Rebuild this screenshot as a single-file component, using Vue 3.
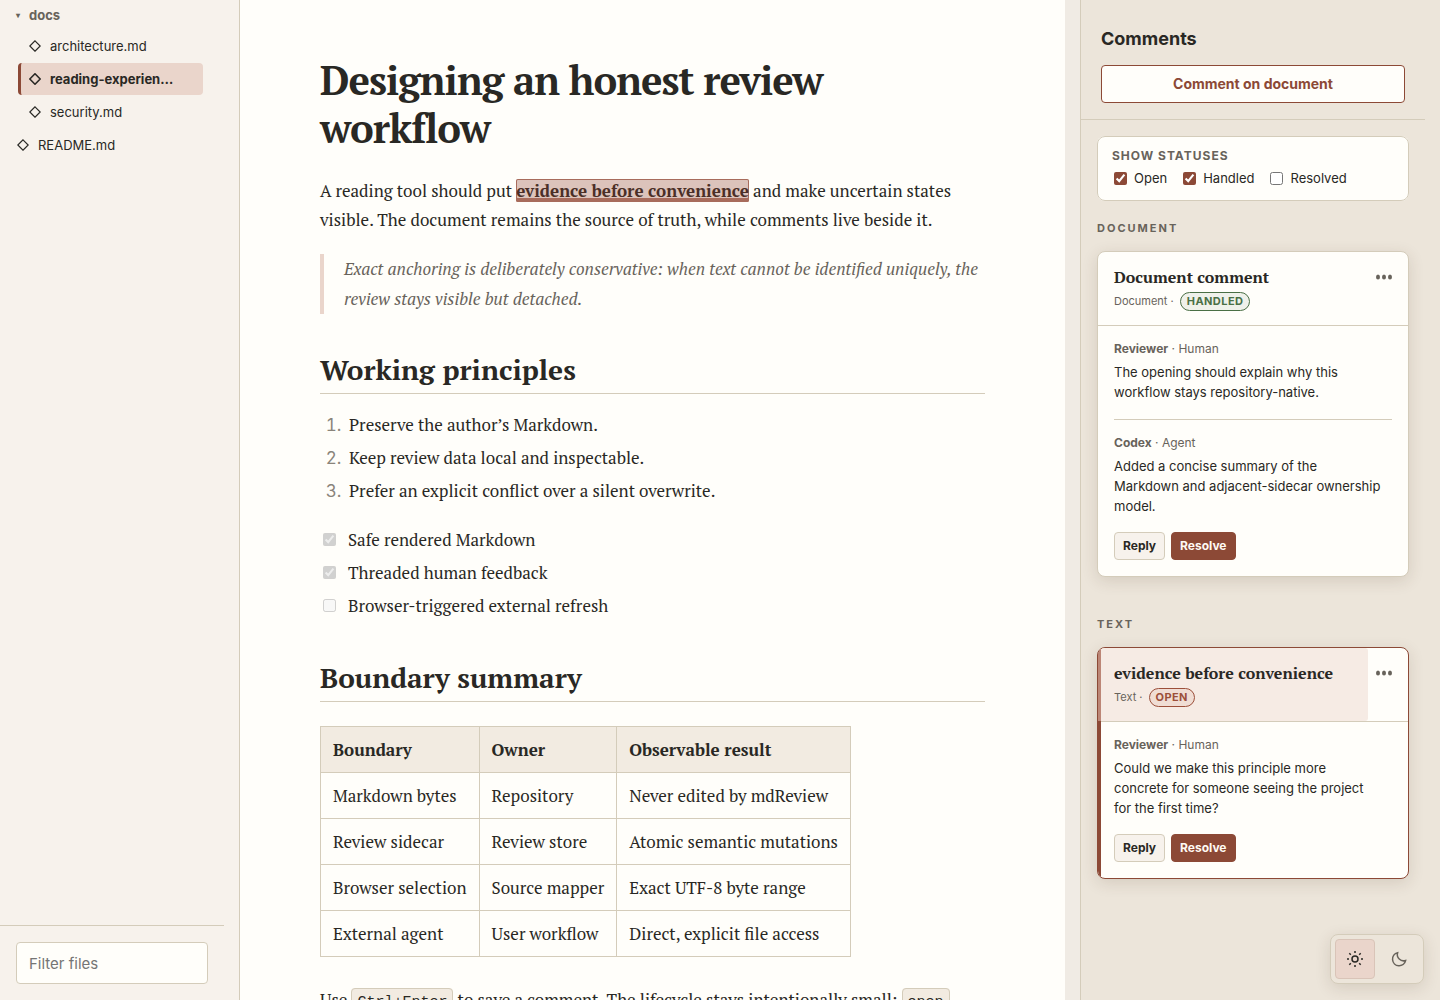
<script setup>
import { ref } from 'vue'

const files = [
  { name: 'architecture.md', nested: true },
  { name: 'reading-experience.md', nested: true, active: true },
  { name: 'security.md', nested: true },
  { name: 'README.md', nested: false },
]
const principles = [
  'Preserve the author’s Markdown.',
  'Keep review data local and inspectable.',
  'Prefer an explicit conflict over a silent overwrite.',
]
const tasks = [
  { label: 'Safe rendered Markdown', done: true },
  { label: 'Threaded human feedback', done: true },
  { label: 'Browser-triggered external refresh', done: false },
]
const rows = [
  ['Markdown bytes', 'Repository', 'Never edited by mdReview'],
  ['Review sidecar', 'Review store', 'Atomic semantic mutations'],
  ['Browser selection', 'Source mapper', 'Exact UTF-8 byte range'],
  ['External agent', 'User workflow', 'Direct, explicit file access'],
]
const statuses = ref([
  { label: 'Open', on: true },
  { label: 'Handled', on: true },
  { label: 'Resolved', on: false },
])
const groups = [
  {
    heading: 'Document',
    title: 'Document comment',
    kind: 'Document',
    status: 'handled',
    messages: [
      { author: 'Reviewer', role: 'Human', text: 'The opening should explain why this workflow stays repository-native.' },
      { author: 'Codex', role: 'Agent', text: 'Added a concise summary of the Markdown and adjacent-sidecar ownership model.' },
    ],
  },
  {
    heading: 'Text',
    title: 'evidence before convenience',
    kind: 'Text',
    status: 'open',
    selected: true,
    messages: [
      { author: 'Reviewer', role: 'Human', text: 'Could we make this principle more concrete for someone seeing the project for the first time?' },
    ],
  },
]
const filter = ref('')
const theme = ref('light')
</script>

<template>
  <div class="shell">
    <nav class="files" aria-label="Files">
      <div class="tree">
        <button class="folder" type="button"><span class="caret">▾</span>docs</button>
        <a
          v-for="file in files"
          :key="file.name"
          href="#"
          class="file"
          :class="{ nested: file.nested, active: file.active }"
        >
          <svg class="diamond" viewBox="0 0 12 12" aria-hidden="true"><path d="M6 .8 11.2 6 6 11.2 .8 6Z" /></svg>
          <span class="file-name">{{ file.name }}</span>
        </a>
      </div>
      <div class="filter">
        <input v-model="filter" type="search" placeholder="Filter files" aria-label="Filter files" />
      </div>
    </nav>

    <main class="reader">
      <article class="doc">
        <h1>Designing an honest review workflow</h1>
        <p>
          A reading tool should put <mark>evidence before convenience</mark> and make uncertain states visible.
          The document remains the source of truth, while comments live beside it.
        </p>
        <blockquote>
          Exact anchoring is deliberately conservative: when text cannot be identified uniquely, the review stays
          visible but detached.
        </blockquote>
        <h2>Working principles</h2>
        <ol>
          <li v-for="item in principles" :key="item">{{ item }}</li>
        </ol>
        <ul class="tasks">
          <li v-for="task in tasks" :key="task.label">
            <label><input type="checkbox" disabled :checked="task.done" />{{ task.label }}</label>
          </li>
        </ul>
        <h2>Boundary summary</h2>
        <table>
          <thead>
            <tr><th>Boundary</th><th>Owner</th><th>Observable result</th></tr>
          </thead>
          <tbody>
            <tr v-for="row in rows" :key="row[0]">
              <td v-for="cell in row" :key="cell">{{ cell }}</td>
            </tr>
          </tbody>
        </table>
        <p>
          Use <code>Ctrl+Enter</code> to save a comment. The lifecycle stays intentionally small: <code>open</code>,
          <code>handled</code>, and <code>resolved</code>.
        </p>
      </article>
    </main>

    <aside class="comments">
      <header class="comments-head">
        <h2>Comments</h2>
        <button type="button" class="outline">Comment on document</button>
      </header>
      <div class="comments-body">
        <fieldset class="statuses">
          <legend>Show statuses</legend>
          <div class="status-row">
            <label v-for="status in statuses" :key="status.label">
              <input v-model="status.on" type="checkbox" />{{ status.label }}
            </label>
          </div>
        </fieldset>
        <section v-for="group in groups" :key="group.heading" class="group">
          <h3>{{ group.heading }}</h3>
          <div class="card" :class="{ selected: group.selected }">
            <div class="card-head">
              <div class="card-title">
                <h4>{{ group.title }}</h4>
                <div class="meta">
                  {{ group.kind }} · <span class="badge" :class="group.status">{{ group.status }}</span>
                </div>
              </div>
              <button type="button" class="more" aria-label="Thread actions">
                <svg viewBox="0 0 18 6" aria-hidden="true">
                  <ellipse cx="3" cy="3" rx="2" ry="2.6" /><ellipse cx="9" cy="3" rx="2" ry="2.6" /><ellipse cx="15" cy="3" rx="2" ry="2.6" />
                </svg>
              </button>
            </div>
            <div class="card-body">
              <div v-for="message in group.messages" :key="message.author" class="message">
                <div class="author"><strong>{{ message.author }}</strong> · {{ message.role }}</div>
                <p>{{ message.text }}</p>
              </div>
              <div class="actions">
                <button type="button" class="reply">Reply</button>
                <button type="button" class="resolve">Resolve</button>
              </div>
            </div>
          </div>
        </section>
      </div>
    </aside>

    <div class="theme" role="group" aria-label="Theme">
      <button type="button" aria-label="Light theme" :class="{ on: theme === 'light' }" @click="theme = 'light'">
        <svg viewBox="0 0 18 18" aria-hidden="true">
          <circle cx="9" cy="9" r="3" />
          <path d="M9 1v2M9 15v2M1 9h2M15 9h2M3.3 3.3l1.5 1.5M13.2 13.2l1.5 1.5M3.3 14.7l1.5-1.5M13.2 4.8l1.5-1.5" />
        </svg>
      </button>
      <button type="button" aria-label="Dark theme" :class="{ on: theme === 'dark' }" @click="theme = 'dark'">
        <svg viewBox="0 0 18 18" aria-hidden="true"><path d="M7.6 2.7a6.6 6.6 0 1 0 8 7.8A6.3 6.3 0 0 1 7.6 2.7Z" /></svg>
      </button>
    </div>
  </div>
</template>

<style>
body {
  margin: 0;
}
</style>

<style scoped>
.shell {
  --paper: #fffefa;
  --side: #f7f2ec;
  --panel: #ece5da;
  --line: #d4ccba;
  --ink: #292824;
  --muted: #68635b;
  --accent: #8c4936;
  --soft: #ead5cb;
  --serif: "PT Serif", Charter, "Noto Serif", "Liberation Serif", serif;
  display: grid;
  grid-template-columns: 240px minmax(0, 1fr) 360px;
  height: 100vh;
  overflow: hidden;
  background: #f0ebe4;
  color: var(--ink);
  font: 13px/20px Inter, "Liberation Sans", sans-serif;
}
*,
*::before {
  box-sizing: border-box;
}
button,
input {
  font: inherit;
  color: inherit;
}
h1,
h2,
h3,
h4,
p {
  margin: 0;
}

.files {
  display: flex;
  flex-direction: column;
  min-height: 0;
  padding-right: 15px;
  border-right: 1px solid var(--line);
  background: var(--side);
}
.tree {
  flex: 1;
  display: flex;
  flex-direction: column;
  gap: 1px;
  padding: 1px 21px 0 6px;
}
.folder {
  display: flex;
  align-items: center;
  height: 28px;
  padding: 0 10px;
  border: 0;
  background: none;
  color: var(--muted);
  font-weight: 700;
}
.caret {
  width: 13px;
  font-size: 8px;
  text-align: left;
}
.file {
  display: flex;
  align-items: center;
  gap: 9px;
  height: 32px;
  padding: 0 24px 0 8px;
  border-left: 3px solid transparent;
  border-radius: 4px;
  color: inherit;
  text-decoration: none;
}
.file.nested {
  margin-left: 12px;
}
.file.active {
  border-color: var(--accent);
  background: var(--soft);
  font-weight: 700;
}
.diamond {
  flex: none;
  width: 12px;
  height: 12px;
  fill: none;
  stroke: currentColor;
  stroke-width: 1.2;
}
.active .diamond {
  stroke-width: 1.6;
}
.file-name {
  overflow: hidden;
  white-space: nowrap;
  text-overflow: ellipsis;
}
.filter {
  padding: 16px;
  border-top: 1px solid var(--line);
}
.filter input {
  display: block;
  width: 100%;
  height: 42px;
  padding: 0 12px;
  border: 1px solid var(--line);
  border-radius: 4px;
  background: var(--paper);
  font-size: 15px;
}
.filter input::placeholder {
  color: #757575;
}

.reader {
  min-width: 0;
  margin-right: 15px;
  overflow: hidden;
  background: var(--paper);
}
.doc {
  padding: 56px 80px;
  font-family: var(--serif);
  font-size: 17px;
  line-height: 29px;
}
.doc h1 {
  margin-bottom: 24px;
  font-size: 40px;
  line-height: 48px;
  letter-spacing: -1px;
}
.doc h2 {
  margin: 38px 0 16px;
  padding-bottom: 5px;
  border-bottom: 1px solid var(--line);
  font-size: 28px;
  line-height: 36px;
}
mark {
  border-radius: 2px;
  background: #dcc3bb;
  box-shadow: inset 0 0 0 1px #a86c5c, inset 0 -4px #a86c5c;
  color: #4b2f27;
  font-weight: 700;
}
blockquote {
  margin: 20px 0 0;
  padding-left: 20px;
  border-left: 4px solid var(--soft);
  color: var(--muted);
  font-style: italic;
  line-height: 30px;
}
ol,
ul {
  display: flex;
  flex-direction: column;
  gap: 4px;
  margin: 0 0 20px;
  padding-left: 26px;
}
ol li {
  padding-left: 3px;
}
li::marker {
  color: #8a847a;
  font-family: Inter, sans-serif;
}
.tasks {
  padding-left: 3px;
  list-style: none;
}
.doc .tasks + h2 {
  margin-top: 40px;
}
.tasks label {
  display: flex;
  align-items: center;
  gap: 12px;
}
input[type="checkbox"] {
  flex: none;
  width: 13px;
  height: 13px;
  margin: 0;
  accent-color: var(--accent);
}
table {
  margin: 24px 0 28px;
  border-collapse: collapse;
}
th,
td {
  padding: 8px 12px;
  border: 1px solid var(--line);
  text-align: left;
}
th {
  background: #f2ebe1;
}
code {
  padding: 5px;
  border: 1px solid var(--line);
  border-radius: 4px;
  background: #f2ebe1;
  font-family: "Liberation Mono", monospace;
  font-size: 15px;
}

.comments {
  padding-right: 15px;
  border-left: 1px solid var(--line);
  background: var(--panel);
  overflow: hidden;
}
.comments-head {
  padding: 27px 20px 16px;
  border-bottom: 1px solid var(--line);
}
.comments-head h2 {
  margin-bottom: 14px;
  font-size: 18px;
  line-height: 24px;
}
.outline {
  display: block;
  width: 100%;
  height: 38px;
  border: 1px solid var(--accent);
  border-radius: 4px;
  background: var(--paper);
  color: var(--accent);
  font-size: 14px;
  font-weight: 700;
}
.comments-body {
  padding: 16px;
}
.statuses {
  margin: 0;
  padding: 9px 14px 10px;
  border: 1px solid var(--line);
  border-radius: 8px;
  background: var(--paper);
}
.statuses legend,
.group h3 {
  color: var(--muted);
  font-size: 11px;
  font-weight: 700;
  line-height: 20px;
  letter-spacing: 2px;
  text-transform: uppercase;
}
.statuses legend {
  float: left;
  width: 100%;
  padding: 0;
  font-size: 12px;
  letter-spacing: 1px;
}
.status-row {
  display: flex;
  gap: 16px;
  padding-left: 2px;
  line-height: 24px;
}
.status-row label {
  display: flex;
  align-items: center;
  gap: 7px;
}
.group {
  margin-top: 17px;
}
.group + .group {
  margin-top: 37px;
}
.group h3 {
  margin-bottom: 13px;
}
.card {
  position: relative;
  border: 1px solid var(--line);
  border-radius: 8px;
  background: var(--paper);
  box-shadow: 0 4px 16px rgba(70, 50, 30, 0.14);
  overflow: hidden;
}
.card-head {
  display: flex;
  border-bottom: 1px solid var(--line);
}
.card-title {
  flex: 1;
  padding: 14px 16px 12px;
}
h4 {
  margin-bottom: 1px;
  font-family: var(--serif);
  font-size: 16px;
  line-height: 22px;
}
.meta {
  display: flex;
  align-items: center;
  gap: 6px;
  height: 24px;
  color: var(--muted);
  font-size: 11px;
}
.badge {
  padding: 0 6px;
  border: 1px solid;
  border-radius: 10px;
  font-weight: 700;
  line-height: 17px;
  letter-spacing: 0.04em;
  text-transform: uppercase;
}
.badge.handled {
  background: #eff1ea;
  color: #4a6f45;
}
.badge.open {
  background: #f0ddd4;
  color: #9c4f3a;
}
.more {
  align-self: flex-start;
  width: 40px;
  height: 50px;
  padding: 0;
  border: 0;
  background: none;
  color: var(--muted);
}
.more svg {
  display: block;
  width: 18px;
  height: 6px;
  margin-left: 7px;
  fill: currentColor;
}
.card-body {
  padding: 15px 16px 16px;
}
.message p {
  padding-right: 10px;
}
.message + .message {
  margin-top: 17px;
  padding-top: 15px;
  border-top: 1px solid var(--line);
}
.author {
  margin-bottom: 5px;
  color: var(--muted);
  font-size: 12px;
  line-height: 16px;
}
.actions {
  display: flex;
  gap: 6px;
  margin-top: 16px;
}
.actions button {
  height: 28px;
  padding: 0 8px;
  border: 1px solid var(--line);
  border-radius: 4px;
  background: var(--side);
  font-size: 12px;
  font-weight: 700;
}
.actions .resolve {
  border-color: var(--accent);
  background: var(--accent);
  color: #fffaf3;
}
.card.selected {
  border-color: var(--accent);
}
.card.selected::before {
  content: "";
  position: absolute;
  inset: 0 auto 0 0;
  width: 3px;
  background: var(--accent);
}
.selected .card-title {
  position: relative;
  padding-left: 13px;
  border-left: 3px solid #bc8676;
  border-radius: 0 3px 3px 0;
  background: #f6ebe4;
}

.theme {
  position: fixed;
  right: 16px;
  bottom: 16px;
  display: flex;
  gap: 4px;
  padding: 4px;
  border: 1px solid var(--line);
  border-radius: 8px;
  background: var(--panel);
  box-shadow: 0 4px 16px rgba(70, 50, 30, 0.14);
}
.theme button {
  display: grid;
  place-items: center;
  width: 40px;
  height: 40px;
  padding: 0;
  border: 1px solid transparent;
  border-radius: 4px;
  background: none;
  color: var(--muted);
}
.theme button.on {
  border-color: #d9c4b8;
  background: var(--soft);
  color: var(--ink);
}
.theme svg {
  width: 18px;
  height: 18px;
  fill: none;
  stroke: currentColor;
  stroke-width: 1.5;
}
</style>
